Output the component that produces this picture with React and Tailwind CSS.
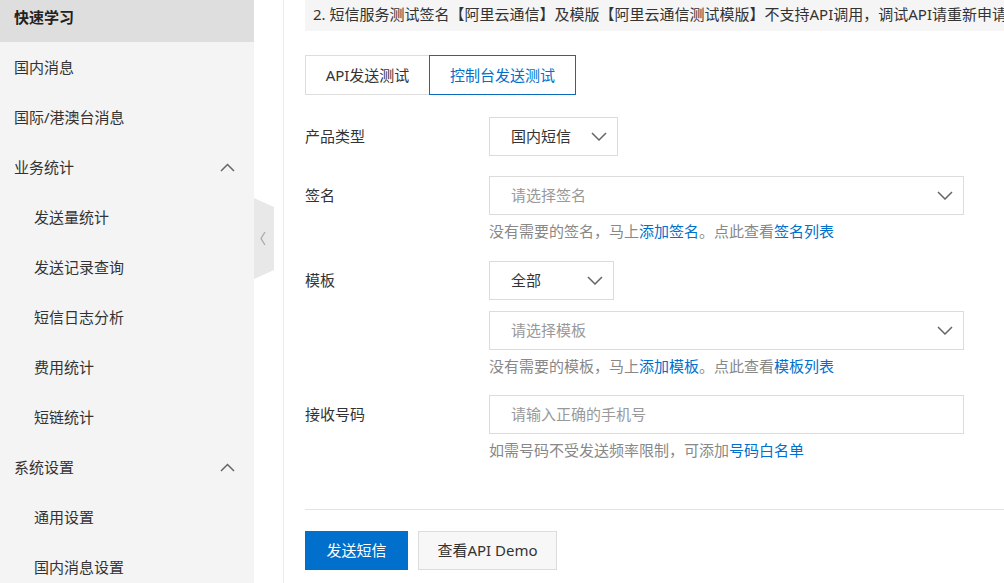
import React from 'react';

const font = "font-['Noto_Sans','Noto_Sans_CJK_SC',sans-serif]";

const ChevronDown = () => (
    <svg width="16" height="9" viewBox="0 0 16 9" fill="none">
        <polyline points="1,1 8,8 15,1" stroke="#666" strokeWidth="1.5" />
    </svg>
);

const ChevronUp = () => (
    <svg width="15" height="9" viewBox="0 0 15 9" fill="none">
        <polyline points="1,8 7.5,1.5 14,8" stroke="#666" strokeWidth="1.5" />
    </svg>
);

const menu = [
    { label: '快速学习', active: true },
    { label: '国内消息' },
    { label: '国际/港澳台消息' },
    { label: '业务统计', group: true },
    { label: '发送量统计', sub: true },
    { label: '发送记录查询', sub: true },
    { label: '短信日志分析', sub: true },
    { label: '费用统计', sub: true },
    { label: '短链统计', sub: true },
    { label: '系统设置', group: true },
    { label: '通用设置', sub: true },
    { label: '国内消息设置', sub: true },
];

const Sidebar = () => (
    <div className="w-[254px] shrink-0 bg-[#f4f4f4]">
        <div className="-mt-[8px]">
            {menu.map((m) => (
                <div
                    key={m.label}
                    className={`h-[50px] flex items-center justify-between pr-[19px] text-[15px] ${
                        m.sub ? 'pl-[34px]' : 'pl-[14px]'
                    } ${m.active ? 'bg-[#dedede] text-[#222] font-semibold' : 'text-[#333]'}`}
                >
                    <span>{m.label}</span>
                    {m.group && <ChevronUp />}
                </div>
            ))}
        </div>
    </div>
);

const Select = ({ value, placeholder, wide }) => (
    <div
        className={`h-[39px] border border-[#dcdcdc] bg-white flex items-center justify-between pl-[21px] pr-[10px] text-[15px] ${
            wide ? 'w-[475px]' : ''
        }`}
    >
        <span className={value ? 'text-[#333] mr-[20px]' : 'text-[#999]'}>{value || placeholder}</span>
        <ChevronDown />
    </div>
);

const Help = ({ parts }) => (
    <div className="mt-[6px] h-[20px] leading-[20px] text-[15px] text-[#888]">
        {parts.map((p, i) =>
            p.link ? (
                <span key={i} className="text-[#0070cc]">{p.t}</span>
            ) : (
                <span key={i}>{p.t}</span>
            )
        )}
    </div>
);

const Row = ({ label, children, top }) => (
    <div className={`flex ${top}`}>
        <div className="w-[184px] shrink-0 h-[39px] flex items-center text-[15px] text-[#333]">{label}</div>
        <div className="flex flex-col items-start">{children}</div>
    </div>
);

export default function App() {
    return (
        <div className={`w-[1004px] h-[583px] overflow-hidden flex bg-white ${font}`}>
            <Sidebar />
            <div className="w-[29px] shrink-0 bg-white pt-[198px]">
                <svg width="20" height="81" viewBox="0 0 20 81">
                    <polygon points="0,0 20,9 20,72 0,81" fill="#e8e8e8" />
                    <polyline points="11,34 7,40.5 11,47" fill="none" stroke="#aaa" strokeWidth="1.3" />
                </svg>
            </div>
            <div className="flex-1 border-l border-[#ececec] pl-[21px] min-w-0">
                <div className="h-[31px] bg-[#f5f5f5] pl-[8px] pt-[3px] leading-[22px] text-[15px] text-[#333] whitespace-nowrap overflow-hidden">
                    2. 短信服务测试签名【阿里云通信】及模版【阿里云通信测试模版】不支持API调用，调试API请重新申请签名和模版
                </div>

                <div className="mt-[24px] flex h-[40px] text-[15px]">
                    <div className="w-[124px] border border-r-0 border-[#ddd] flex items-center justify-center text-[#333]">
                        API发送测试
                    </div>
                    <div className="w-[147px] border border-[#0b6bbd] flex items-center justify-center text-[#0070cc]">
                        控制台发送测试
                    </div>
                </div>

                <Row label="产品类型" top="mt-[22px]">
                    <Select value="国内短信" />
                </Row>

                <Row label="签名" top="mt-[20px]">
                    <Select placeholder="请选择签名" wide />
                    <Help
                        parts={[
                            { t: '没有需要的签名，马上' },
                            { t: '添加签名', link: true },
                            { t: '。点此查看' },
                            { t: '签名列表', link: true },
                        ]}
                    />
                </Row>

                <Row label="模板" top="mt-[20px]">
                    <div className="w-[125px]">
                        <Select value="全部" />
                    </div>
                    <div className="mt-[11px]">
                        <Select placeholder="请选择模板" wide />
                    </div>
                    <Help
                        parts={[
                            { t: '没有需要的模板，马上' },
                            { t: '添加模板', link: true },
                            { t: '。点此查看' },
                            { t: '模板列表', link: true },
                        ]}
                    />
                </Row>

                <Row label="接收号码" top="mt-[19px]">
                    <div className="w-[475px] h-[39px] border border-[#dcdcdc] flex items-center pl-[21px] text-[15px] text-[#999]">
                        请输入正确的手机号
                    </div>
                    <Help
                        parts={[
                            { t: '如需号码不受发送频率限制，可添加' },
                            { t: '号码白名单', link: true },
                        ]}
                    />
                </Row>

                <div className="mt-[49px] border-t border-[#e3e3e3]" />

                <div className="mt-[21px] flex gap-[10px] text-[15px]">
                    <div className="w-[103px] h-[39px] bg-[#0070cc] text-white flex items-center justify-center">
                        发送短信
                    </div>
                    <div className="w-[139px] h-[39px] bg-[#f7f7f7] border border-[#dcdcdc] text-[#333] flex items-center justify-center">
                        查看API Demo
                    </div>
                </div>
            </div>
        </div>
    );
}
